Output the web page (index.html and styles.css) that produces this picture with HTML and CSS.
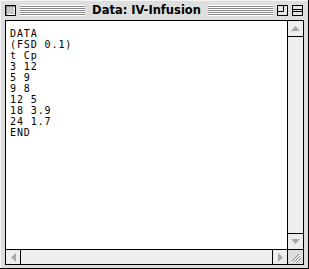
FILE: index.html
```html
<!DOCTYPE html>
<html lang="en">
<head>
  <meta charset="UTF-8" />
  <title>Data: IV-Infusion</title>
  <link rel="stylesheet" href="styles.css">
</head>
<body>
  <div class="window">
    <div class="titlebar">
      <span class="box close"></span>
      <span class="stripes"></span>
      <span class="title">Data: IV-Infusion</span>
      <span class="stripes"></span>
      <span class="box zoom">
        <svg width="11" height="11" viewBox="0 0 11 11">
          <rect x="0.5" y="0.5" width="10" height="10" fill="#e4e4e4" stroke="#000"/>
          <path d="M0.5 6.5 H6.5 V0.5" fill="none" stroke="#000"/>
        </svg>
      </span>
      <span class="box shade">
        <svg width="11" height="11" viewBox="0 0 11 11">
          <rect x="0.5" y="0.5" width="10" height="10" fill="#e4e4e4" stroke="#000"/>
          <path d="M0.5 4.5 H10.5 M0.5 6.5 H10.5" fill="none" stroke="#000"/>
        </svg>
      </span>
    </div>

    <div class="frame">
      <pre class="doc">DATA
(FSD 0.1)
t Cp
3 12
5 9
9 8
12 5
18 3.9
24 1.7
END</pre>

      <div class="vscroll">
        <div class="arrow up">
          <svg width="9" height="5" viewBox="0 0 9 5"><path d="M0 5 L4.5 0 L9 5 Z" fill="#a8a8a8"/></svg>
        </div>
        <div class="track"></div>
        <div class="arrow down">
          <svg width="9" height="5" viewBox="0 0 9 5"><path d="M0 0 L4.5 5 L9 0 Z" fill="#a8a8a8"/></svg>
        </div>
      </div>

      <div class="hscroll">
        <div class="arrow left">
          <svg width="5" height="9" viewBox="0 0 5 9"><path d="M5 0 L0 4.5 L5 9 Z" fill="#a8a8a8"/></svg>
        </div>
        <div class="track"></div>
        <div class="arrow right">
          <svg width="5" height="9" viewBox="0 0 5 9"><path d="M0 0 L5 4.5 L0 9 Z" fill="#a8a8a8"/></svg>
        </div>
      </div>

      <div class="grow">
        <svg width="15" height="14" viewBox="0 0 15 14">
          <path d="M4 11 L11 4 M6 12 L12 6 M8 13 L13 8" stroke="#888" stroke-width="1" fill="none"/>
          <path d="M5 12 L12 5 M7 13 L13 7" stroke="#fff" stroke-width="1" fill="none"/>
        </svg>
      </div>
    </div>
  </div>
</body>
</html>
```

FILE: styles.css
```css
body {
  margin: 0;
  background: #fff;
}

.window {
  width: 309px;
  height: 269px;
  box-sizing: border-box;
  background: #dedede;
  border-right: 1px solid #000;
  border-bottom: 1px solid #000;
  box-shadow: inset 1px 1px 0 #f4f4f4;
}

.titlebar {
  height: 20px;
  display: flex;
  align-items: center;
  gap: 4px;
  padding: 0 5px 0 5px;
}

.box {
  display: block;
  width: 11px;
  height: 11px;
  flex: none;
}

.close {
  box-sizing: border-box;
  border: 1px solid #000;
  background: #c8c8c8;
  box-shadow: inset 1px 1px 0 #888, inset -1px -1px 0 #fff;
}

.zoom svg,
.shade svg {
  display: block;
}

.stripes {
  flex: 1;
  height: 11px;
  background: repeating-linear-gradient(to bottom, #fff 0, #fff 1px, #888 1px, #888 2px);
}

.title {
  font-family: "DejaVu Sans", sans-serif;
  font-weight: bold;
  font-size: 11.5px;
  color: #000;
  padding: 0 3px;
  white-space: nowrap;
}

.frame {
  margin-left: 5px;
  width: 299px;
  height: 245px;
  box-sizing: border-box;
  border: 1px solid #000;
  display: grid;
  grid-template-columns: 281px 16px;
  grid-template-rows: 228px 15px;
}

.doc {
  margin: 0;
  padding: 7px 0 0 4px;
  background: #fff;
  font-family: "DejaVu Sans Mono", monospace;
  font-size: 10px;
  letter-spacing: 0.9px;
  line-height: 11px;
  color: #000;
}

.vscroll {
  border-left: 1px solid #000;
  background: #eee;
  display: flex;
  flex-direction: column;
}

.vscroll .arrow {
  height: 15px;
  display: flex;
  align-items: center;
  justify-content: center;
}

.vscroll .up {
  border-bottom: 1px solid #000;
}

.vscroll .down {
  border-top: 1px solid #000;
}

.vscroll .track {
  flex: 1;
}

.hscroll {
  border-top: 1px solid #000;
  background: #eee;
  display: flex;
}

.hscroll .arrow {
  width: 14px;
  display: flex;
  align-items: center;
  justify-content: center;
}

.hscroll .left {
  border-right: 1px solid #000;
}

.hscroll .right {
  border-left: 1px solid #000;
}

.hscroll .track {
  flex: 1;
}

.grow {
  border-top: 1px solid #000;
  border-left: 1px solid #000;
  background: #ddd;
}

.grow svg {
  display: block;
}
```
